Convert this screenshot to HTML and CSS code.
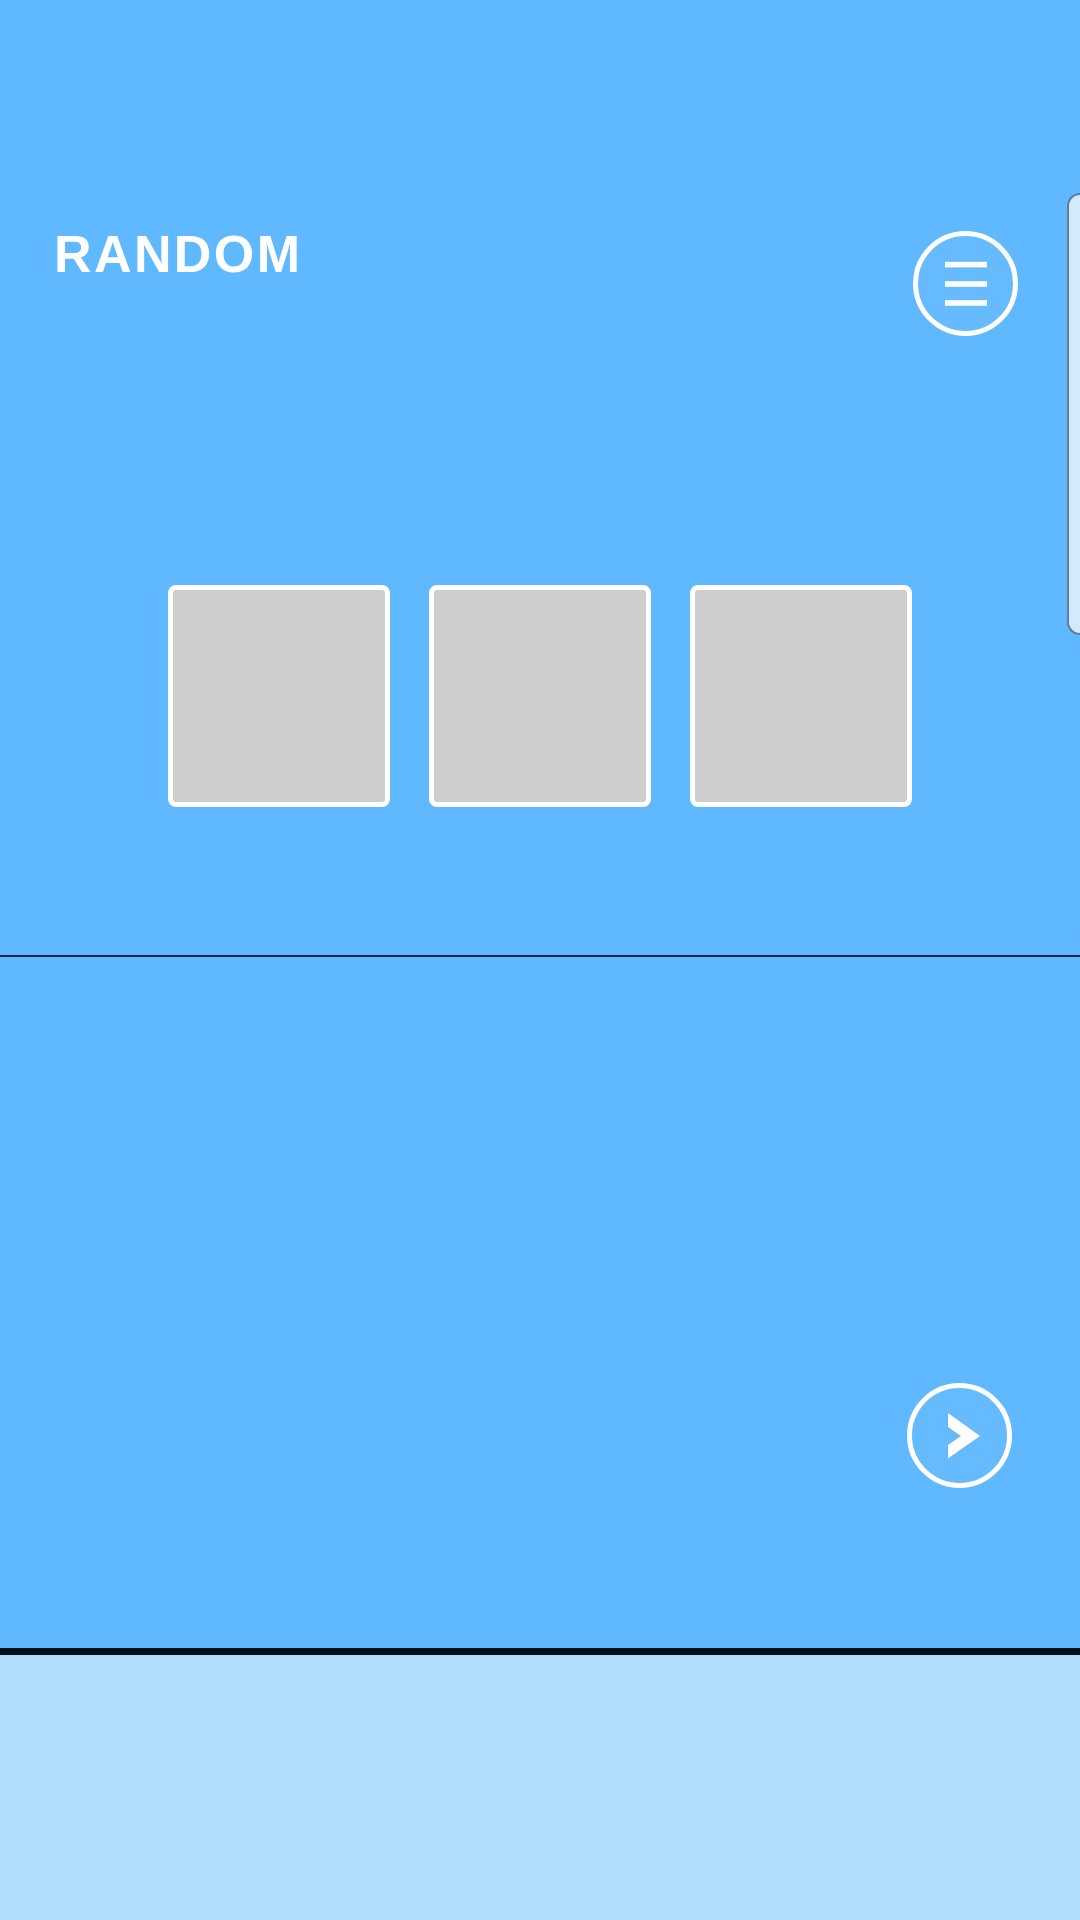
FILE: index.html
```html
<!DOCTYPE html>
<html>
<head>
<meta charset="utf-8">
<link rel="stylesheet" href="styles.css">
</head>
<body>
<div class="screen">
  <section class="top">
    <div class="header">
      <h1 class="title">RANDOM</h1>
      <button class="round-btn menu-btn" aria-label="menu">
        <svg viewBox="0 0 105 105" width="105" height="105">
          <circle cx="52.5" cy="52.5" r="50" fill="rgba(255,255,255,0.04)" stroke="#fff" stroke-width="5"/>
          <rect x="32" y="30.8" width="42" height="5.6" fill="#fff"/>
          <rect x="32" y="50.2" width="42" height="5.6" fill="#fff"/>
          <rect x="32" y="69.2" width="42" height="5.6" fill="#fff"/>
        </svg>
      </button>
    </div>
    <div class="slots">
      <div class="slot"></div>
      <div class="slot"></div>
      <div class="slot"></div>
    </div>
    <div class="drawer"></div>
  </section>
  <section class="middle">
    <button class="round-btn next-btn" aria-label="next">
      <svg viewBox="0 0 105 105" width="105" height="105">
        <circle cx="52.5" cy="52.5" r="50" fill="rgba(255,255,255,0.04)" stroke="#fff" stroke-width="5"/>
        <polygon points="41,30 73,53 41,75.5 41,62 54,53 41,44" fill="#fff"/>
      </svg>
    </button>
  </section>
  <section class="bottom"></section>
</div>
</body>
</html>
```

FILE: styles.css
```css
html, body {
  margin: 0;
  padding: 0;
}
body {
  width: 1080px;
  height: 1920px;
  overflow: hidden;
  font-family: "Liberation Sans", Arial, sans-serif;
}
.screen {
  display: flex;
  flex-direction: column;
  height: 1920px;
}
.top {
  position: relative;
  flex: none;
  background: #60b8fe;
  border-bottom: 2px solid #0b2a4a;
  padding-top: 228px;
  box-sizing: border-box;
  height: 957px;
}
.header {
  display: flex;
  justify-content: space-between;
  align-items: flex-start;
  padding: 0 62px 0 54px;
}
.title {
  margin: 0;
  color: #fff;
  font-size: 52px;
  line-height: 1;
  font-weight: 700;
  letter-spacing: 2.4px;
}
.round-btn {
  width: 105px;
  height: 105px;
  padding: 0;
  border: 0;
  background: none;
  display: block;
}
.round-btn svg {
  display: block;
}
.menu-btn {
  margin-top: 3px;
}
.slots {
  display: flex;
  justify-content: center;
  gap: 39px;
  margin-top: 249px;
}
.slot {
  width: 222px;
  height: 222px;
  box-sizing: border-box;
  background: #cecece;
  border: 5px solid #fff;
  border-radius: 8px;
}
.drawer {
  position: absolute;
  left: 1067px;
  top: 193px;
  width: 13px;
  height: 442px;
  background: #d3e9fc;
  border: 2px solid #5d7d9c;
  border-right: 0;
  border-radius: 30px 0 0 30px;
  box-sizing: border-box;
}
.middle {
  flex: none;
  height: 698px;
  box-sizing: border-box;
  background: #60b8fe;
  border-bottom: 7px solid #020d18;
  display: flex;
  justify-content: flex-end;
  align-items: flex-end;
  padding: 0 68px 160px 0;
}
.bottom {
  flex: 1;
  background: #b0dcfe;
}
```
